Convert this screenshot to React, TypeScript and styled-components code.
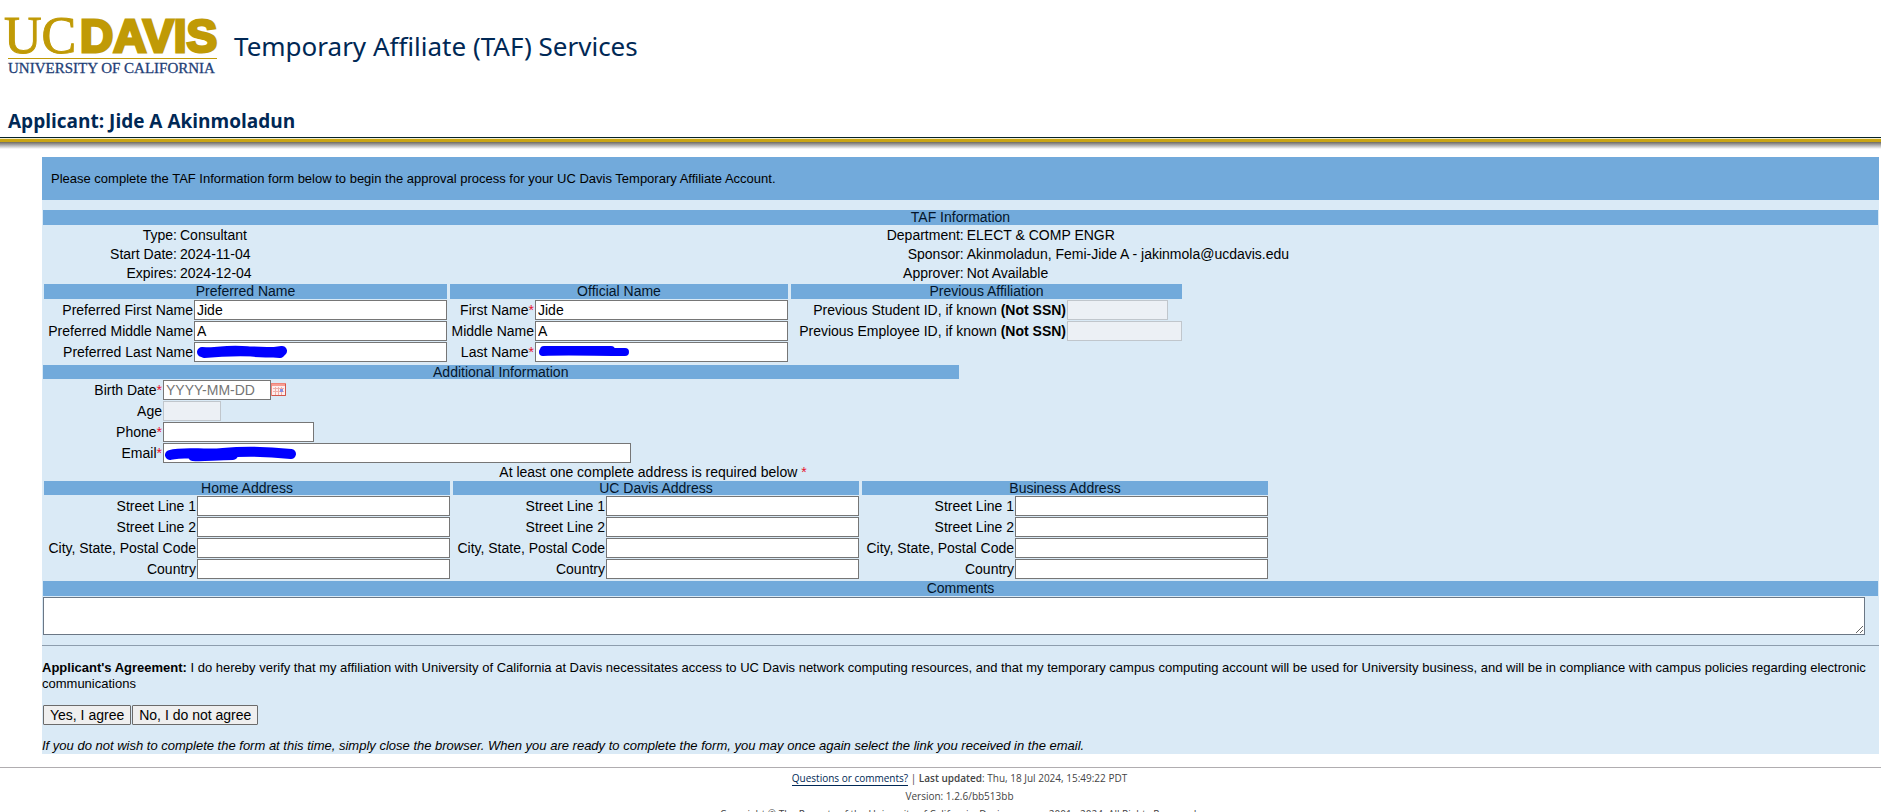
import React from 'react';
import styled, { createGlobalStyle } from 'styled-components';

const GlobalStyle = createGlobalStyle`
  *, *::before, *::after { box-sizing: border-box; }
  html { background: #fff; }
  body {
    margin: 0;
    color: #000;
    font: 14px/15px 'Liberation Sans', Arial, sans-serif;
  }
`;

const humanist = "'Noto Sans', 'Open Sans', 'Lucida Sans', sans-serif";

const Page = styled.div`
  height: 100vh;
  overflow: hidden;
`;

const Brand = styled.div`
  display: flex;
  align-items: center;
  gap: 10px;
  height: 92px;
  padding-left: 4px;
`;

const Title = styled.h1`
  margin: 0;
  color: #002855;
  font: 400 26px/32px ${humanist};
`;

const Applicant = styled.h2`
  margin: 0;
  padding: 15px 8px;
  height: 45px;
  color: #002855;
  font: 700 19px/28px 'Open Sans', sans-serif;
`;

const HeaderRule = styled.div`
  height: 12px;
  border-top: 1px solid #06232b;
  background: linear-gradient(
    #f3edcb 0 1px, #c9a514 1px 4px, #6f6a5e 4px, #a9a9a9 7px, #fff 11px
  );
`;

const Panel = styled.main`
  margin: 8px 2px 13px 42px;
  background: #daeaf6;
`;

const Notice = styled.p`
  margin: 0 0 10px;
  padding: 14px 9px 13px;
  background: #72aadb;
  font-size: 13px;
  line-height: 16px;
`;

const Form = styled.form`
  margin: 0;
  padding: 0 1px;
`;

const Bar = styled.h3<{ $slim?: boolean }>`
  display: block;
  margin: 0;
  height: ${(p) => (p.$slim ? 14 : 15)}px;
  background: #72aadb;
  color: #03152a;
  font: inherit;
  text-align: center;
`;

const InfoColumns = styled.div`
  display: grid;
  grid-template-columns: 45% 55%;
  padding: 1px 0;
`;

const Facts = styled.dl<{ $label: number }>`
  display: grid;
  grid-template-columns: ${(p) => p.$label}px 1fr;
  column-gap: 3px;
  margin: 0;
  line-height: 19px;
  dt { text-align: right; }
  dd { margin: 0; }
`;

const Groups = styled.div`
  display: flex;
  align-items: flex-start;
  gap: 3px;
  padding: 0 1px;
`;

const Group = styled.section<{ $label: number; $field: number }>`
  display: grid;
  grid-template-columns: ${(p) => p.$label}px ${(p) => p.$field}px;
  gap: 1px 0;
  ${Bar} { grid-column: 1 / -1; }
`;

const Label = styled.label`
  padding-right: 1px;
  line-height: 20px;
  text-align: right;
  white-space: nowrap;
`;

const Star = styled.span`
  color: #e8112d;
`;

const Cell = styled.div`
  position: relative;
  display: flex;
  align-items: flex-start;
`;

const TextBox = styled.input<{ $width?: number }>`
  width: ${(p) => (p.$width ? `${p.$width}px` : '100%')};
  height: 20px;
  margin: 0;
  padding: 1px 2px;
  border: 1px solid #767676;
  border-radius: 0;
  background: #fff;
  color: #000;
  font: inherit;
  &:disabled { border-color: #c0c6cc; background: #ecf0f5; }
  &::placeholder { color: #757575; opacity: 1; }
`;

const Marker = styled.svg`
  position: absolute;
  left: 0;
  top: 0;
  pointer-events: none;
`;

const Additional = styled.section`
  width: calc(50% - 2px);
  min-width: 640px;
  margin: 3px 0 0;
`;

const AdditionalFields = styled.div`
  display: grid;
  grid-template-columns: 120px 468px;
  row-gap: 1px;
  padding-top: 1px;
`;

const DateButton = styled.button`
  width: 16px;
  height: 15px;
  margin-top: 2px;
  padding: 0;
  border: 0;
  background: none;
  svg { display: block; }
`;

const AddressNote = styled.p`
  margin: 0;
  width: 1220px;
  line-height: 18px;
  text-align: center;
`;

const Comments = styled.section`
  margin-top: 2px;
  padding-bottom: 10px;
`;

const CommentBox = styled.textarea`
  display: block;
  width: calc(100% - 13px);
  height: 38px;
  margin-top: 1px;
  padding: 2px;
  border: 1px solid #6b7785;
  border-radius: 0;
  font: inherit;
  resize: both;
`;

const Agreement = styled.div`
  border-top: 1px solid #8d9dad;
  padding-top: 14px;
  font-size: 13px;
  line-height: 16px;
  p { margin: 0; }
`;

const Actions = styled.div`
  display: flex;
  gap: 1px;
  padding: 13px 1px;
`;

const Choice = styled.button`
  height: 20px;
  padding: 0 6px;
  border: 1px solid #6b6b6b;
  border-radius: 1px;
  background: #efefef;
  color: #000;
  font: 14px/16px 'Liberation Sans', Arial, sans-serif;
`;

const Footer = styled.footer`
  border-top: 1px solid #b0adb0;
  padding-top: 1px;
  color: #444;
  text-align: center;
  font: 10px/18px 'Open Sans', sans-serif;
  p { margin: 0; padding-left: 38px; }
  b { font-weight: 600; }
`;

const FooterLink = styled.a`
  border-bottom: 1px solid #002855;
  color: #002855;
  text-decoration: none;
`;

const LogoArt = styled.svg`
  display: block;
  overflow: visible;
`;

const Logo = () => (
  <LogoArt width="220" height="66" viewBox="0 0 220 66" role="img" aria-label="UC Davis, University of California">
    <g fill="#c09a06" stroke="#c09a06" strokeLinejoin="miter">
      <text x="0" y="40" fontFamily="'Liberation Serif', serif" fontSize="52" strokeWidth="1">UC</text>
      <text x="76" y="39" fontFamily="'Liberation Sans', sans-serif" fontWeight="700" fontSize="46" strokeWidth="3">DAVIS</text>
    </g>
    <rect x="4" y="45" width="209" height="1" fill="#c09a06" />
    <text x="4" y="60" fontFamily="'Liberation Serif', serif" fontSize="15" fill="#1f3f77" stroke="#1f3f77" strokeWidth="0.3">UNIVERSITY OF CALIFORNIA</text>
  </LogoArt>
);

const CalendarIcon = () => (
  <svg width="16" height="14" viewBox="0 0 16 14" aria-hidden="true">
    <rect x="0.5" y="0.5" width="14" height="12" fill="#fdeeee" stroke="#ef8478" />
    <rect x="1" y="1" width="13" height="2" fill="#f79d92" />
    <path d="M2 5.5H13M2 8.5H13M4.5 4V12M7.5 4V12M10.5 4V12" stroke="#efb0a9" />
    <path d="M9 6h3v3H9z" fill="#8a8fe0" />
    <path d="M14.5 1V12.5H1" stroke="#d0574b" fill="none" />
  </svg>
);

const strokes = {
  preferred: { d: 'M8 10C18 11 30 8 48 9S72 12 88 9M10 11C30 9 62 9 86 11', w: 10 },
  official: { d: 'M9 8H76M8 10C30 9 60 10 90 10', w: 8 },
  email: { d: 'M7 12C22 8 40 12 60 10S100 8 128 11M30 13C40 14 52 12 70 12', w: 10 },
};

type FieldProps = {
  id: string;
  label: React.ReactNode;
  required?: boolean;
  value?: string;
  width?: number;
  disabled?: boolean;
  placeholder?: string;
  mark?: keyof typeof strokes;
  after?: React.ReactNode;
};

const Field = ({ id, label, required, value, width, disabled, placeholder, mark, after }: FieldProps) => (
  <>
    <Label htmlFor={id}>
      {label}
      {required && <Star>*</Star>}
    </Label>
    <Cell>
      <TextBox id={id} defaultValue={value} $width={width} disabled={disabled} placeholder={placeholder} />
      {after}
      {mark && (
        <Marker width="140" height="20" aria-hidden="true">
          <path
            d={strokes[mark].d}
            fill="none"
            stroke="#0000ff"
            strokeWidth={strokes[mark].w}
            strokeLinecap="round"
            strokeLinejoin="round"
          />
        </Marker>
      )}
    </Cell>
  </>
);

const Address = ({ title, prefix }: { title: string; prefix: string }) => (
  <Group $label={153} $field={253}>
    <Bar $slim>{title}</Bar>
    {['Street Line 1', 'Street Line 2', 'City, State, Postal Code', 'Country'].map((line, i) => (
      <Field key={line} id={`${prefix}-${i}`} label={line} />
    ))}
  </Group>
);

export default function App() {
  return (
    <Page>
      <GlobalStyle />
      <header>
        <Brand>
          <Logo />
          <Title>Temporary Affiliate (TAF) Services</Title>
        </Brand>
        <Applicant>Applicant: Jide A Akinmoladun</Applicant>
        <HeaderRule />
      </header>
      <Panel>
        <Notice>
          Please complete the TAF Information form below to begin the approval process for your UC Davis Temporary
          Affiliate Account.
        </Notice>
        <Form onSubmit={(e) => e.preventDefault()}>
          <Bar>TAF Information</Bar>
          <InfoColumns>
            <Facts $label={134}>
              <dt>Type:</dt>
              <dd>Consultant</dd>
              <dt>Start Date:</dt>
              <dd>2024-11-04</dd>
              <dt>Expires:</dt>
              <dd>2024-12-04</dd>
            </Facts>
            <Facts $label={95}>
              <dt>Department:</dt>
              <dd>ELECT &amp; COMP ENGR</dd>
              <dt>Sponsor:</dt>
              <dd>Akinmoladun, Femi-Jide A - jakinmola@ucdavis.edu</dd>
              <dt>Approver:</dt>
              <dd>Not Available</dd>
            </Facts>
          </InfoColumns>
          <Groups>
            <Group $label={150} $field={253}>
              <Bar>Preferred Name</Bar>
              <Field id="pref-first" label="Preferred First Name" value="Jide" />
              <Field id="pref-middle" label="Preferred Middle Name" value="A" />
              <Field id="pref-last" label="Preferred Last Name" mark="preferred" />
            </Group>
            <Group $label={85} $field={253}>
              <Bar>Official Name</Bar>
              <Field id="first" label="First Name" required value="Jide" />
              <Field id="middle" label="Middle Name" value="A" />
              <Field id="last" label="Last Name" required mark="official" />
            </Group>
            <Group $label={276} $field={115}>
              <Bar>Previous Affiliation</Bar>
              <Field id="student" label={<>Previous Student ID, if known <b>(Not SSN)</b></>} width={101} disabled />
              <Field id="employee" label={<>Previous Employee ID, if known <b>(Not SSN)</b></>} disabled />
            </Group>
          </Groups>
          <Additional>
            <Bar $slim>Additional Information</Bar>
            <AdditionalFields>
              <Field
                id="birth"
                label="Birth Date"
                required
                width={108}
                placeholder="YYYY-MM-DD"
                after={
                  <DateButton type="button" aria-label="Choose birth date">
                    <CalendarIcon />
                  </DateButton>
                }
              />
              <Field id="age" label="Age" width={58} disabled />
              <Field id="phone" label="Phone" required width={151} />
              <Field id="email" label="Email" required mark="email" />
            </AdditionalFields>
          </Additional>
          <AddressNote>
            At least one complete address is required below <Star>*</Star>
          </AddressNote>
          <Groups>
            <Address title="Home Address" prefix="home" />
            <Address title="UC Davis Address" prefix="campus" />
            <Address title="Business Address" prefix="business" />
          </Groups>
          <Comments>
            <Bar as="label" htmlFor="comments">Comments</Bar>
            <CommentBox id="comments" />
          </Comments>
        </Form>
        <Agreement>
          <p>
            <b>Applicant's Agreement:</b> I do hereby verify that my affiliation with University of California at Davis
            necessitates access to UC Davis network computing resources, and that my temporary campus computing account
            will be used for University business, and will be in compliance with campus policies regarding electronic
            communications
          </p>
          <Actions>
            <Choice type="button">Yes, I agree</Choice>
            <Choice type="button">No, I do not agree</Choice>
          </Actions>
          <p>
            <i>
              If you do not wish to complete the form at this time, simply close the browser. When you are ready to
              complete the form, you may once again select the link you received in the email.
            </i>
          </p>
        </Agreement>
      </Panel>
      <Footer>
        <p>
          <FooterLink href="#contact">Questions or comments?</FooterLink> | <b>Last updated</b>: Thu, 18 Jul 2024,
          15:49:22 PDT
        </p>
        <p>Version: 1.2.6/bb513bb</p>
        <p>Copyright © The Regents of the University of California, Davis campus, 2001 - 2024. All Rights Reserved.</p>
      </Footer>
    </Page>
  );
}
